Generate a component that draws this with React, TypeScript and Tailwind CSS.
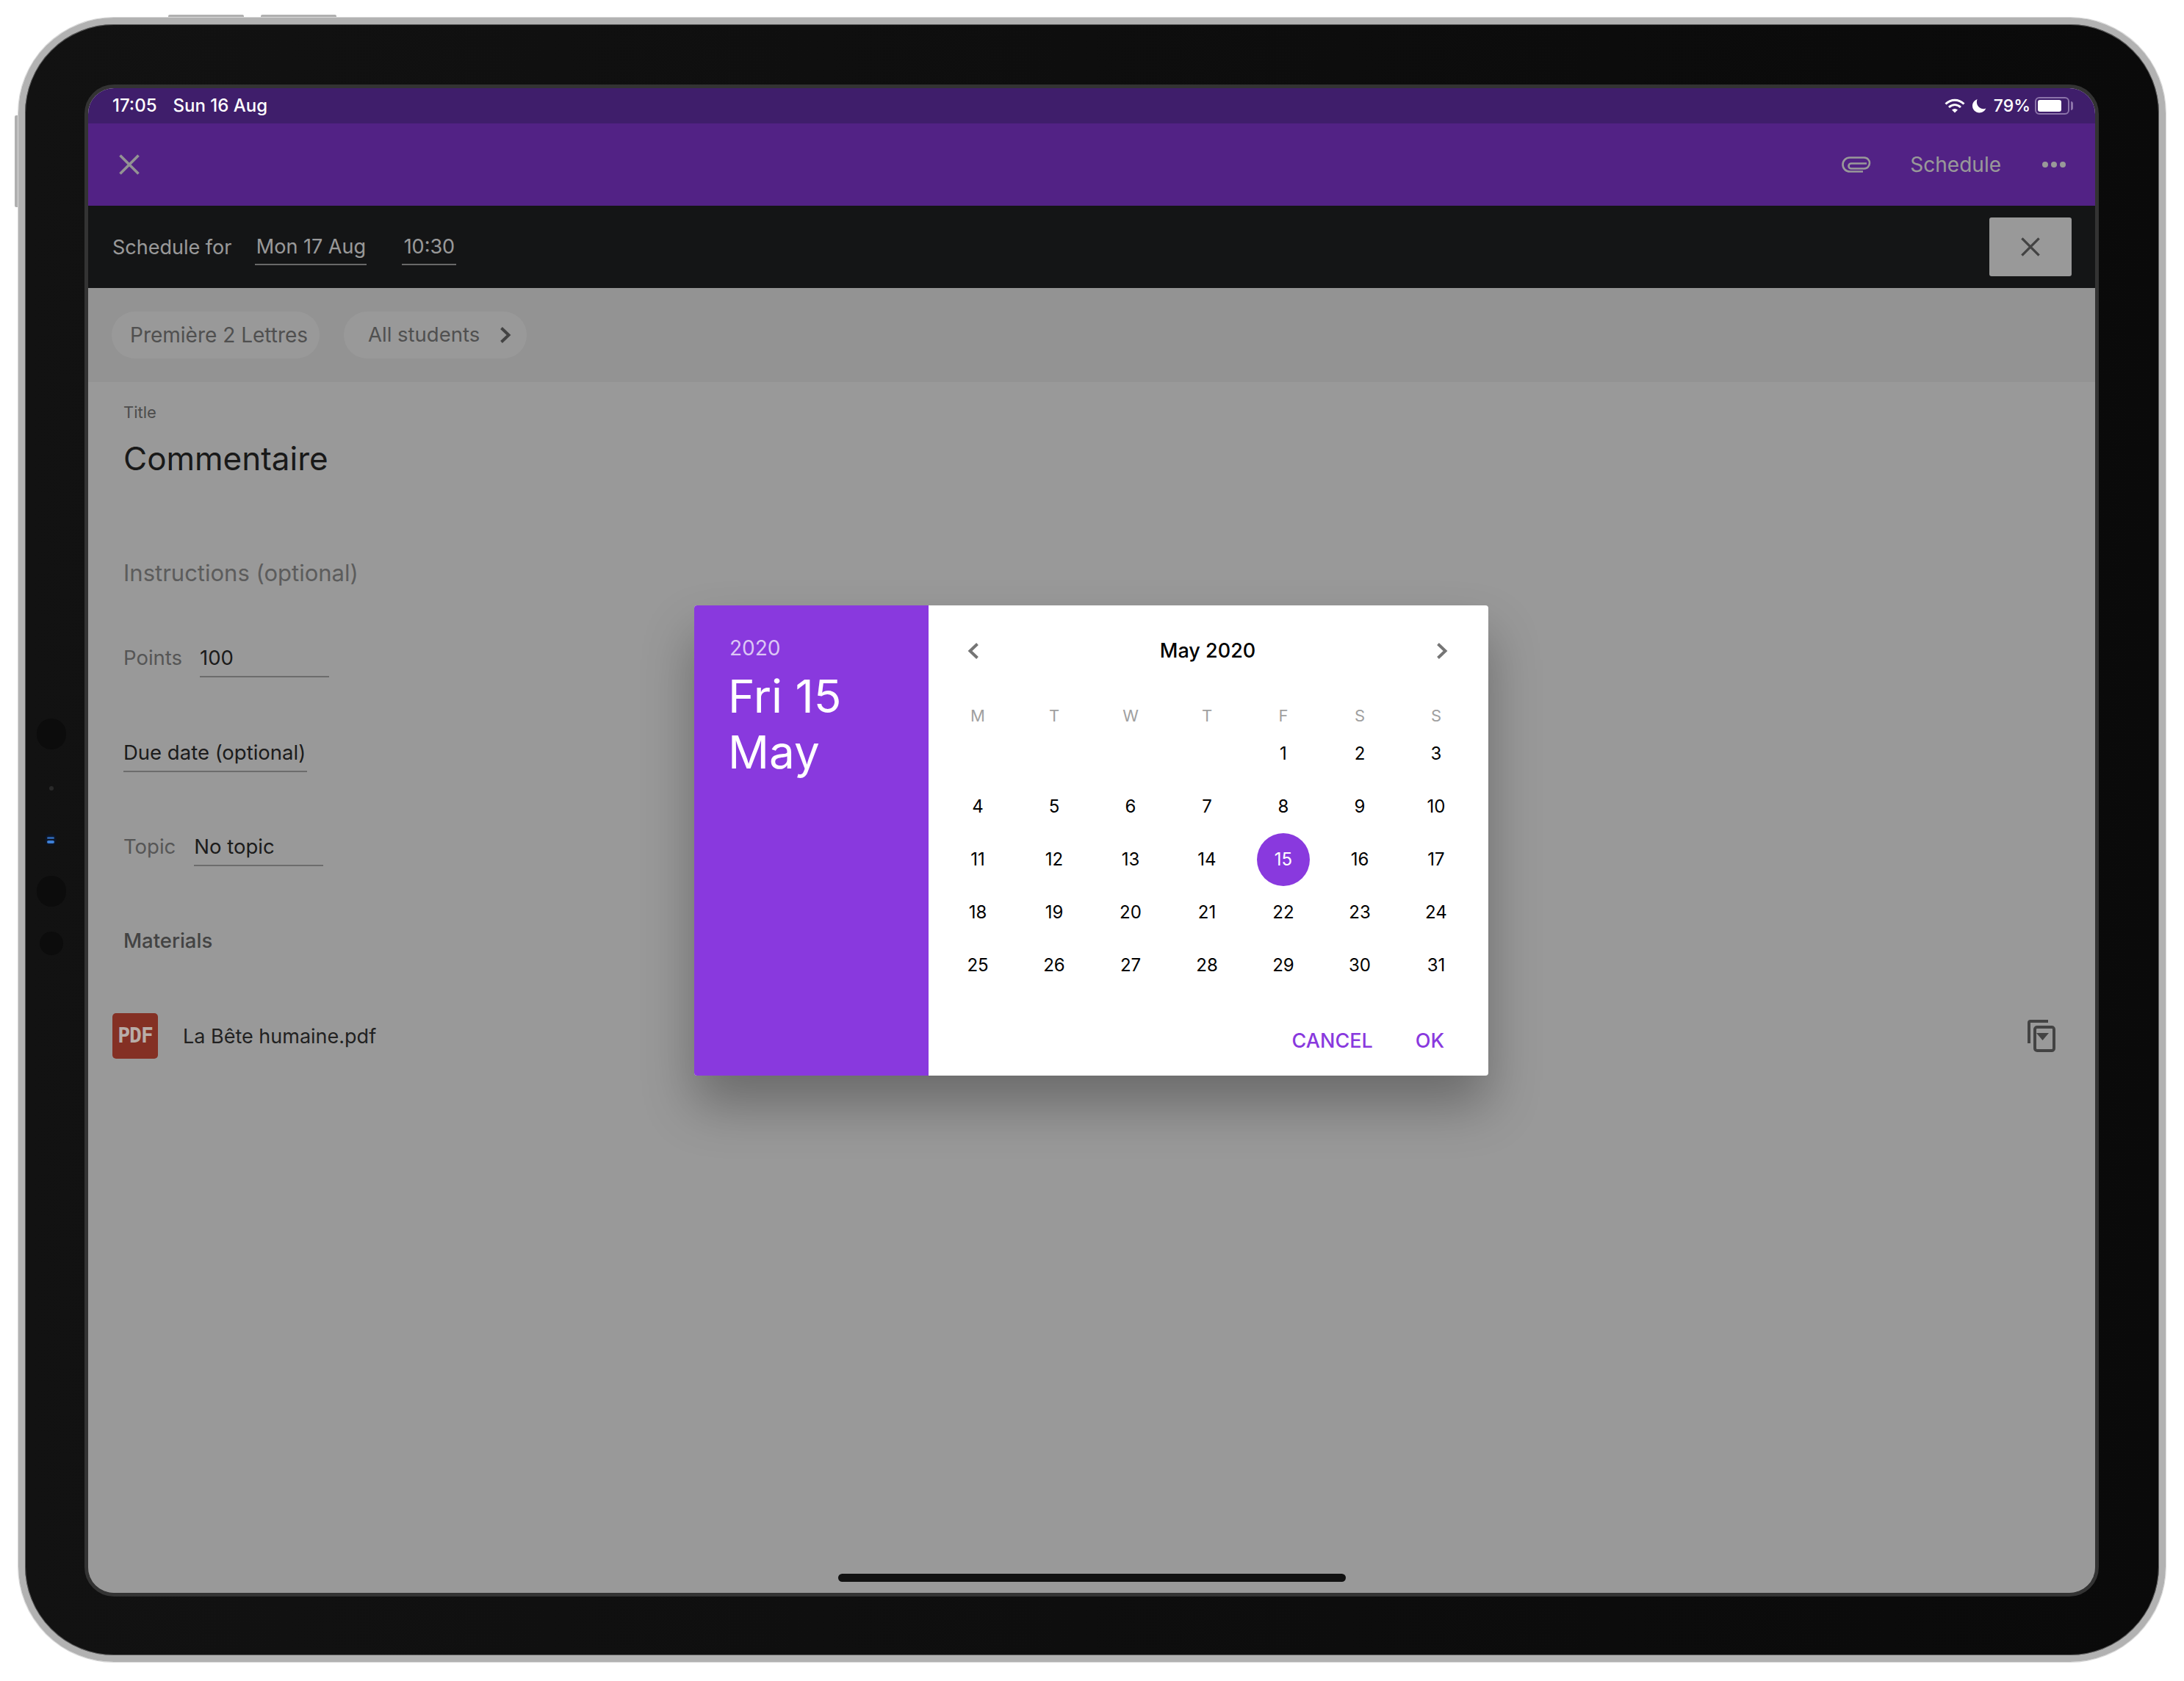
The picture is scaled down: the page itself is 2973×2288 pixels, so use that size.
import { ReactNode } from "react";

const weekDays = ["M", "T", "W", "T", "F", "S", "S"];
const blanks = [0, 1, 2, 3];
const days = Array.from({ length: 31 }, (_, i) => i + 1);

function Cross({ className }: { className: string }) {
  return (
    <svg viewBox="0 0 28 28" className={className} fill="none" stroke="currentColor" strokeWidth="3.6">
      <path d="M1.5 1.5 26.5 26.5M26.5 1.5 1.5 26.5" />
    </svg>
  );
}

function Chevron({ left, className }: { left?: boolean; className: string }) {
  return (
    <svg viewBox="0 0 16 22" className={className} fill="none" stroke="currentColor" strokeWidth="4">
      <path d={left ? "M13.5 1.5 3.5 11l10 9.5" : "M2.5 1.5 12.5 11l-10 9.5"} />
    </svg>
  );
}

function Field({ children, width }: { children: ReactNode; width: string }) {
  return (
    <div className={`flex h-[52px] items-center whitespace-nowrap border-b-2 border-[#b5b5b5] pt-[2px] text-[#2f2f2f] ${width}`}>
      {children}
    </div>
  );
}

function StatusBar() {
  return (
    <div className="flex h-[48px] items-center justify-between bg-[#3f1e6b] pl-[33px] pr-[30px] text-[24px] font-medium text-white">
      <div className="flex gap-[22px]">
        <span>17:05</span>
        <span>Sun 16 Aug</span>
      </div>
      <div className="flex items-center">
        <svg viewBox="0 0 28 20" className="h-[20px] w-[28px]" fill="none" stroke="white" strokeWidth="3">
          <path d="M1.5 7.5C9 .5 19 .5 26.5 7.5" />
          <path d="M6 12c5-4.500 11-4.500 16 0" />
          <path d="M14 19.500 10 15.500c2.500-2 5.500-2 8 0z" fill="white" stroke="none" />
        </svg>
        <svg viewBox="0 0 20 20" className="ml-[10px] h-[20px] w-[19px]" fill="white">
          <path d="M7 0.500C2.800 2 0 5.600 0 10c0 5.500 4.500 10 10 10 4.200 0 7.800-2.500 9.300-6.200-1 .4-2.100.6-3.300.6-5.500 0-9.800-4.400-9.800-9.900C6.200 2.900 6.500 1.600 7 .5z" />
        </svg>
        <span className="ml-[10px] text-[23px]">79%</span>
        <div className="ml-[6px] flex h-[24px] w-[47px] items-center rounded-[6px] border-2 border-[#8c74aa] px-[2px]">
          <div className="h-[16px] w-[32px] rounded-[3px] bg-white" />
        </div>
        <div className="ml-[2px] h-[12px] w-[3px] rounded-r-full bg-[#8c74aa]" />
      </div>
    </div>
  );
}

function AppBar() {
  return (
    <div className="flex h-[112px] items-center bg-[#8939de] pl-[42px] pr-[40px] text-white">
      <Cross className="h-[28px] w-[28px] text-[#f5f5f5]" />
      <div className="ml-auto flex items-center text-[28px]">
        <svg viewBox="0 0 40 22" className="h-[22px] w-[40px]" fill="none" stroke="currentColor" strokeWidth="2.6">
          <path d="M29 20.500H11a9.500 9.500 0 0 1 0-19h19.500a7.500 7.500 0 0 1 0 15H13a3.500 3.500 0 0 1 0-7h21" />
        </svg>
        <span className="ml-[53px]">Schedule</span>
        <div className="ml-[56px] flex gap-[4px]">
          <span className="h-[8px] w-[8px] rounded-full bg-white" />
          <span className="h-[8px] w-[8px] rounded-full bg-white" />
          <span className="h-[8px] w-[8px] rounded-full bg-white" />
        </div>
      </div>
    </div>
  );
}

function ScheduleBar() {
  return (
    <div className="flex h-[112px] items-center whitespace-nowrap bg-[#222326] pl-[33px] pr-[32px] text-[27px] text-white">
      <span className="mt-[2px]">Schedule for</span>
      <div className="ml-[32px] flex h-[50px] w-[152px] items-center justify-center border-b-2 border-[#b0b0b0] pt-[3px]">Mon 17 Aug</div>
      <div className="ml-[48px] flex h-[50px] w-[74px] items-center justify-center border-b-2 border-[#b0b0b0] pt-[3px]">10:30</div>
      <div className="ml-auto flex h-[80px] w-[112px] items-center justify-center rounded-[3px] bg-white text-[#717171]">
        <Cross className="h-[26px] w-[28px]" />
      </div>
    </div>
  );
}

function ClassBand() {
  return (
    <div className="flex h-[128px] items-center gap-[33px] whitespace-nowrap bg-[#f6f6f6] pl-[32px] text-[#858585]">
      <div className="flex h-[64px] w-[283px] items-center rounded-full bg-white pl-[25px] text-[28px]">Première 2 Lettres</div>
      <div className="flex h-[64px] w-[249px] items-center rounded-full bg-white pl-[33px] text-[27.5px]">
        <span>All students</span>
        <Chevron className="ml-[27px] h-[22px] w-[16px] text-[#717171]" />
      </div>
    </div>
  );
}

function Form() {
  return (
    <div className="whitespace-nowrap pl-[48px] pr-[54px] pt-[27px] text-[27.5px]">
      <div className="flex h-[28px] items-center text-[22px] text-[#808080]">Title</div>
      <div className="mt-[19px] flex h-[60px] items-center text-[44px] text-[#2a2a2a]">Commentaire</div>
      <div className="mt-[106px] flex h-[40px] items-center text-[31px] text-[#9a9a9a]">Instructions (optional)</div>

      <div className="mt-[70px] flex items-center gap-[24px]">
        <span className="text-[#909090]">Points</span>
        <Field width="w-[176px]">100</Field>
      </div>

      <div className="mt-[77px]">
        <Field width="w-[250px]">Due date (optional)</Field>
      </div>

      <div className="mt-[76px] flex items-center gap-[25px]">
        <span className="text-[#909090]">Topic</span>
        <Field width="w-[176px]">No topic</Field>
      </div>

      <div className="mt-[82px] flex h-[40px] items-center font-medium text-[#717171]">Materials</div>

      <div className="ml-[-15px] mt-[78px] flex items-center">
        <div className="relative z-20 flex h-[62px] w-[62px] items-center justify-center rounded-[5px] bg-[#843024] font-['DejaVu_Sans_Mono',monospace] text-[28px] font-bold tracking-[-1px] text-[#b8ada8]">
          PDF
        </div>
        <span className="ml-[34px] pt-[2px] text-[27px] text-[#383838]">La Bête humaine.pdf</span>
        <svg viewBox="0 0 38 44" className="ml-auto h-[44px] w-[38px] text-[#717171]" fill="none" stroke="currentColor" strokeWidth="4">
          <path d="M28 2H4a2 2 0 0 0-2 2v28" />
          <rect x="10" y="10" width="26" height="32" rx="3" />
          <path d="M12 18h17l-8.500 10z" fill="currentColor" stroke="none" />
        </svg>
      </div>
    </div>
  );
}

function DatePicker() {
  return (
    <div className="mr-[1px] flex h-[640px] w-[1081px] overflow-hidden rounded-[4px] bg-white shadow-[0_40px_70px_rgba(0,0,0,0.3)]">
      <div className="w-[319px] bg-[#8939de] pl-[48px] pt-[42px] text-white">
        <div className="text-[28px] leading-[32px] text-[#dcc6f5]">2020</div>
        <div className="ml-[-2px] mt-[12px] text-[62px] leading-[76px]">
          Fri 15
          <br />
          May
        </div>
      </div>
      <div className="flex flex-1 flex-col">
        <div className="flex h-[124px] items-center justify-between pl-[53px] pr-[55px]">
          <Chevron left className="h-[22px] w-[16px] text-[#757575]" />
          <span className="text-[27px] font-medium text-black">May 2020</span>
          <Chevron className="h-[22px] w-[16px] text-[#757575]" />
        </div>
        <div className="ml-[15px] grid h-[42px] w-[728px] grid-cols-7 items-center pt-[10px] text-center text-[22px] text-[#a0a0a0]">
          {weekDays.map((d, i) => (
            <span key={i}>{d}</span>
          ))}
        </div>
        <div className="ml-[15px] grid w-[728px] grid-cols-7 auto-rows-[72px] text-[24px] text-black">
          {blanks.map((b) => (
            <span key={b} />
          ))}
          {days.map((d) => (
            <div key={d} className="flex items-center justify-center">
              {d === 15 ? (
                <span className="flex h-[72px] w-[72px] items-center justify-center rounded-full bg-[#8939de] text-white">{d}</span>
              ) : (
                d
              )}
            </div>
          ))}
        </div>
        <div className="mt-auto flex h-[96px] items-center justify-end gap-[58px] pr-[60px] pt-[3px] text-[27px] font-medium text-[#8939de]">
          <span>CANCEL</span>
          <span>OK</span>
        </div>
      </div>
    </div>
  );
}

export default function App() {
  return (
    <div className="relative h-[2288px] w-[2973px] overflow-hidden bg-white pl-[25px] pt-[24px] font-[Inter,sans-serif]">
      {/* side buttons */}
      <div className="absolute left-[229px] top-[20px] h-[6px] w-[103px] rounded-t-[2px] bg-[#b0b0b0]" />
      <div className="absolute left-[355px] top-[20px] h-[6px] w-[103px] rounded-t-[2px] bg-[#b0b0b0]" />
      <div className="absolute left-[20px] top-[157px] h-[125px] w-[6px] rounded-l-[2px] bg-[#b0b0b0]" />

      <div className="relative h-[2238px] w-[2923px] rounded-[130px] border-[9px] border-[#b2b2b2] bg-gradient-to-r from-[#121212] to-[#0a0a0a] pl-[81px] pt-[82px] shadow-[inset_0_0_0_1px_#5a5a5a,0_0_0_1px_#d8d8d8]">
        {/* camera bits in the bezel */}
        <div className="absolute left-[16px] top-[945px] h-[42px] w-[40px] rounded-full bg-[#0c0c0c]" />
        <div className="absolute left-[33px] top-[1037px] h-[6px] w-[6px] rounded-full bg-[#2a2a2a]" />
        <div className="absolute left-[27px] top-[1102px] flex h-[16px] w-[16px] flex-col justify-center gap-[2px] rounded-full bg-[#0d1626] px-[3px]">
          <div className="h-[3px] rounded-full bg-[#2b5fa8]" />
          <div className="h-[4px] rounded-full bg-[#3d7fd6]" />
        </div>
        <div className="absolute left-[16px] top-[1159px] h-[42px] w-[40px] rounded-full bg-[#0c0c0c]" />
        <div className="absolute left-[20px] top-[1235px] h-[32px] w-[32px] rounded-full bg-[#0c0c0c]" />

        <div className="h-[2058px] w-[2742px] rounded-[40px] border-[5px] border-[#333333]">
          <div className="relative h-full w-full overflow-hidden rounded-[35px] bg-white">
            <StatusBar />
            <AppBar />
            <ScheduleBar />
            <ClassBand />
            <Form />

            <div className="absolute inset-x-0 bottom-0 top-[48px] z-10 bg-black/40" />
            <div className="absolute inset-0 z-20 flex items-center justify-center">
              <DatePicker />
            </div>
            <div className="absolute bottom-[15px] left-[1021px] z-20 h-[11px] w-[691px] rounded-full bg-[#111111]" />
          </div>
        </div>
      </div>
    </div>
  );
}
